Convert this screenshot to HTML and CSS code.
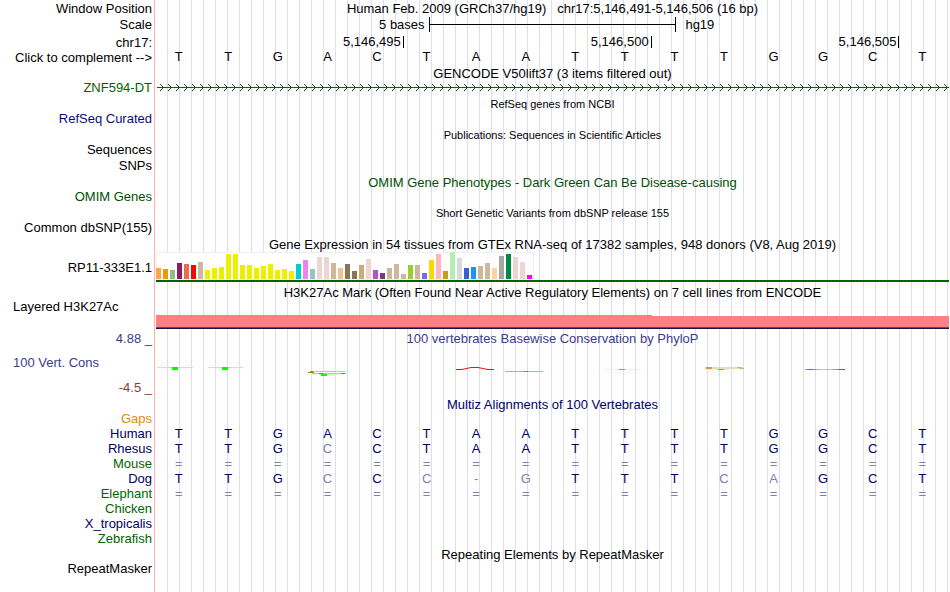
FILE: index.html
```html
<!DOCTYPE html>
<html lang="en">
<head>
<meta charset="utf-8">
<title>Human chr17:5,146,491-5,146,506</title>
<link rel="stylesheet" href="styles.css">
</head>
<body>
<main class="browser">
  <header class="position">
    <div class="row row-head"><span class="label">Window Position</span><h1 class="title">Human Feb. 2009 (GRCh37/hg19) &nbsp; chr17:5,146,491-5,146,506 (16 bp)</h1></div>
    <div class="row row-head"><span class="label">Scale</span><div class="scale"><span class="scale-size">5 bases</span><span class="scale-bar"></span><span class="scale-db">hg19</span></div></div>
    <div class="row row-ruler"><span class="label">chr17:</span><div class="ruler"><span class="tick">5,146,495</span><span class="tick">5,146,500</span><span class="tick">5,146,505</span></div></div>
    <div class="row row-bases"><button class="label complement" type="button">Click to complement --&gt;</button><div class="bases" data-bases="TTGACTAATTTTGGCT"></div></div>
  </header>

  <section class="track">
    <h2 class="title track-title">GENCODE V50lift37 (3 items filtered out)</h2>
    <div class="row"><span class="label green">ZNF594-DT</span>
      <svg class="gene" aria-hidden="true">
        <defs><pattern id="arrow" x="3" y="0" width="8" height="15" patternUnits="userSpaceOnUse"><g fill="#006400"><rect x="1" y="4" width="1" height="1"/><rect x="2" y="5" width="1" height="1"/><rect x="3" y="6" width="1" height="1"/><rect x="3" y="8" width="1" height="1"/><rect x="2" y="9" width="1" height="1"/><rect x="1" y="10" width="1" height="1"/></g></pattern></defs>
        <rect x="1" y="0" width="100%" height="15" fill="url(#arrow)"/>
        <rect class="gene-line" x="1" y="7" width="100%" height="1"/>
      </svg></div>
  </section>

  <section class="track">
    <h2 class="title track-title small">RefSeq genes from NCBI</h2>
    <div class="row"><span class="label blue">RefSeq Curated</span></div>
  </section>

  <section class="track">
    <h2 class="title track-title small">Publications: Sequences in Scientific Articles</h2>
    <div class="row"><span class="label">Sequences</span></div>
    <div class="row row-head"><span class="label">SNPs</span></div>
  </section>

  <section class="track">
    <h2 class="title track-title omim">OMIM Gene Phenotypes - Dark Green Can Be Disease-causing</h2>
    <div class="row"><span class="label omim">OMIM Genes</span></div>
  </section>

  <section class="track">
    <h2 class="title track-title small">Short Genetic Variants from dbSNP release 155</h2>
    <div class="row"><span class="label">Common dbSNP(155)</span></div>
  </section>

  <section class="track">
    <h2 class="title track-title">Gene Expression in 54 tissues from GTEx RNA-seq of 17382 samples, 948 donors (V8, Aug 2019)</h2>
    <div class="row row-gtex"><span class="label">RP11-333E1.1</span>
      <svg class="gtex" role="img" aria-label="Expression by tissue">
        <rect class="gtex-frame" x="0" y="1" width="377" height="27"/>
        <g id="tissues"></g>
        <rect class="gene-line" x="0" y="29" width="100%" height="2"/>
      </svg></div>
  </section>

  <section class="track">
    <h2 class="title track-title">H3K27Ac Mark (Often Found Near Active Regulatory Elements) on 7 cell lines from ENCODE</h2>
    <div class="row row-h3k"><span class="label label-left">Layered H3K27Ac</span>
      <svg class="h3k" role="img" aria-label="H3K27Ac signal">
        <rect width="62.5%" y="16" height="2" fill="#fa7e7e"/>
        <rect width="100%" y="17" height="12" fill="#ff8080"/>
        <rect width="100%" y="28" height="1" fill="#70389a"/>
        <rect width="100%" y="29" height="1" fill="#20104c"/>
      </svg></div>
  </section>

  <section class="track">
    <div class="row row-title"><span class="label cons">4.88 _</span><h2 class="title cons">100 vertebrates Basewise Conservation by PhyloP</h2></div>
    <div class="row row-phylop">
      <div class="label phylop-labels"><span class="label-left cons">100 Vert. Cons</span><span class="low">-4.5 _</span></div>
      <svg class="phylop" viewBox="1 0 793 50" preserveAspectRatio="none" role="img" aria-label="PhyloP scores">
        <defs><linearGradient id="cool"><stop offset="0" stop-color="#9a9aff"/><stop offset=".12" stop-color="#5050ff"/><stop offset=".35" stop-color="#b4b4ff"/><stop offset=".65" stop-color="#b4b4ff"/><stop offset="1" stop-color="#3c3cff"/></linearGradient></defs>
        <g fill="#a8ffa8"><rect x="2" y="22" width="36" height="1"/><rect x="53" y="22" width="35" height="1"/></g>
        <g fill="#dcffdc"><rect x="151" y="29" width="38" height="1"/><rect x="449" y="24" width="36" height="1"/><rect x="548" y="24" width="30" height="1"/></g>
        <g fill="#00ff00"><rect x="17" y="22" width="6" height="3"/><rect x="67" y="22" width="6" height="3"/><rect x="166" y="29" width="6" height="2"/><rect x="464" y="24" width="6" height="1"/><rect x="563" y="24" width="6" height="1"/></g>
        <g fill="#cfc87c"><rect x="155" y="26" width="35" height="1"/><rect x="157" y="28" width="34" height="1"/></g>
        <g fill="#989000"><rect x="153" y="27" width="6" height="1"/><rect x="155" y="26" width="3" height="1"/><rect x="164" y="28" width="4" height="1"/><rect x="186" y="28" width="4" height="1"/></g>
        <path d="M301 24.5 H307 L316 22.5 H323 L333 24.5 H339" fill="none" stroke="#f01010" stroke-width="1.2"/>
        <rect x="350" y="26" width="38" height="1" fill="#ff9090"/><rect x="369" y="26" width="4" height="1" fill="#f05050"/>
        <rect x="550" y="22" width="38" height="2" fill="#e5deb8"/><rect x="551" y="22" width="6" height="2" fill="#b8aa40"/><rect x="582" y="22" width="5" height="1" fill="#c8b860"/><rect x="585" y="23" width="4" height="1" fill="#c8b860"/>
        <rect x="650" y="24" width="40" height="1" fill="url(#cool)"/>
      </svg>
    </div>
  </section>

  <section class="track track-multiz">
    <h2 class="title track-title navy">Multiz Alignments of 100 Vertebrates</h2>
    <table class="alignment">
      <colgroup><col class="species-col"><col span="16"></colgroup>
      <tbody>
        <tr><th class="gaps" scope="row">Gaps</th><td colspan="16"></td></tr>
        <tr data-bases="TTGACTAATTTTGGCT"><th class="navy" scope="row">Human</th></tr>
        <tr data-bases="TTGcCTAATTTTGGCT"><th class="navy" scope="row">Rhesus</th></tr>
        <tr data-bases="================"><th class="green" scope="row">Mouse</th></tr>
        <tr data-bases="TTGcCc-gTTTcaGCT"><th class="navy" scope="row">Dog</th></tr>
        <tr data-bases="================"><th class="green" scope="row">Elephant</th></tr>
        <tr><th class="green" scope="row">Chicken</th><td colspan="16"></td></tr>
        <tr><th class="navy" scope="row">X_tropicalis</th><td colspan="16"></td></tr>
        <tr><th class="green" scope="row">Zebrafish</th><td colspan="16"></td></tr>
      </tbody>
    </table>
  </section>

  <section class="track">
    <h2 class="title track-title">Repeating Elements by RepeatMasker</h2>
    <div class="row"><span class="label">RepeatMasker</span></div>
  </section>
</main>
<script src="tracks.js"></script>
</body>
</html>
```
FILE: styles.css
```css
* { box-sizing: border-box; }

body {
  margin: 0;
  background: #fff;
  color: #000;
  font: 13px/15px "Liberation Sans", Arial, Helvetica, sans-serif;
}

.browser {
  --label-width: 156px;
  min-height: 100vh;
  margin-right: 1px;
  background:
    linear-gradient(#ffb0b0, #ffb0b0) 154px 0 / 1px 100% no-repeat,
    repeating-linear-gradient(90deg, #dcdcf8 0 1px, transparent 1px 12px) 167px 0 / 100% 100% no-repeat;
}

.row {
  display: grid;
  grid-template-columns: var(--label-width) 1fr;
  min-height: 15px;
}

.row-head { height: 16px; line-height: 18px; }
.row-ruler { min-height: 18px; align-items: end; }
.row-bases { height: 16px; }
.row-title { min-height: 0; height: 14px; line-height: 16px; }
.row-gtex { height: 32px; line-height: 34px; }
.row-h3k { min-height: 30px; }
.row-phylop { min-height: 50px; }

.label {
  padding-right: 4px;
  text-align: right;
  white-space: nowrap;
}

.label-left { padding-left: 13px; text-align: left; }

.complement {
  align-self: start;
  border: 0;
  padding-top: 0;
  padding-bottom: 0;
  padding-left: 0;
  background: none;
  color: inherit;
  font: inherit;
  cursor: pointer;
}

.title {
  margin: 0;
  font-size: 13px;
  font-weight: normal;
  text-align: center;
  white-space: nowrap;
}

.track { padding-bottom: 2px; }
.track-multiz { padding-bottom: 1px; }
.track-title { height: 14px; margin-left: var(--label-width); line-height: 16px; }
.small { font-size: 11px; line-height: 14px; }

.scale { display: grid; grid-template-columns: 1fr 31.25% 1fr; }
.scale-size { padding-right: 4px; text-align: right; }
.scale-db { padding-left: 9px; }
.scale-bar {
  height: 15px;
  margin-top: 1px;
  border: solid #000;
  border-width: 0 1px;
  background: linear-gradient(#000, #000) 0 7px / 100% 1px no-repeat;
}

.ruler { display: grid; grid-template-columns: repeat(16, 1fr); }
.tick {
  grid-column: span 5;
  margin-bottom: 2px;
  padding-right: 2px;
  border-right: 1px solid #000;
  line-height: 12px;
  text-align: right;
}

.bases { display: grid; grid-template-columns: repeat(16, 1fr); }
.bases span { padding-right: 4px; line-height: 14px; text-align: center; }

svg { display: block; width: 100%; }
.gene, .gtex, .h3k { shape-rendering: crispEdges; }
.gene { height: 15px; }
.gtex { height: 32px; }
.h3k { height: 30px; }
.phylop { height: 50px; }
.gene-line { fill: #006400; }
.gtex-frame { fill: #fff; stroke: #f0f0f0; }

.phylop-labels {
  display: flex;
  flex-direction: column;
  justify-content: space-between;
  padding-top: 10px;
}

.alignment { width: 100%; border-collapse: collapse; table-layout: fixed; }
.species-col { width: var(--label-width); }
.alignment th, .alignment td { height: 15px; padding: 0 4px 0 0; font-weight: normal; }
.alignment th { text-align: right; }
.alignment td { color: #000064; text-align: center; }
.alignment .mismatch { color: #8080b2; }

.green { color: #006400; }
.omim { color: #005000; }
.blue { color: #0c0c78; }
.navy { color: #000064; }
.cons { color: #3c3c8c; }
.low { color: #8c3c3c; }
.gaps { color: #e08a10; }
```
FILE: tracks.js
```js
// Tissue bars of the expression track: [height, colour]
const tissues = [
  [11, "#ffa54f"], [10, "#ee9a00"], [9, "#8fbc8f"], [16, "#8b1c62"], [15, "#ee6a50"], [14, "#ff0000"], [17, "#cdb79e"],
  ...[9, 11, 12, 25, 25, 14, 14, 11, 13, 15, 9, 10, 8].map(h => [h, "#eeee00"]),
  [15, "#00cdcd"], [19, "#ee82ee"], [10, "#9ac0cd"], [22, "#eed5d2"], [22, "#eed5d2"], [16, "#cdb79e"], [11, "#eec591"],
  [15, "#8b7355"], [8, "#8b7355"], [14, "#cdaa7d"], [20, "#eed5d2"], [9, "#b452cd"], [6, "#7a378b"], [11, "#cdb79e"],
  [15, "#cdb79e"], [5, "#cdb79e"], [14, "#9acd32"], [14, "#cdb79e"], [6, "#7a67ee"], [19, "#ffd700"], [25, "#ffb6c1"],
  [8, "#cd9b1d"], [27, "#b4eeb4"], [21, "#d9d9d9"], [11, "#3a5fcd"], [12, "#1e90ff"], [13, "#cdb79e"], [16, "#cdb79e"],
  [11, "#ffd39b"], [23, "#a6a6a6"], [25, "#008b45"], [22, "#eed5d2"], [17, "#eed5d2"], [4, "#ff00ff"]
];

const group = document.getElementById("tissues");
tissues.forEach(([height, colour], i) => {
  const bar = document.createElementNS("http://www.w3.org/2000/svg", "rect");
  bar.setAttribute("x", i * 7);
  bar.setAttribute("y", 28 - height);
  bar.setAttribute("width", 5);
  bar.setAttribute("height", height);
  bar.setAttribute("fill", colour);
  group.append(bar);
});

// Lower case in the data marks a base that differs from human.
document.querySelectorAll("[data-bases]").forEach(row => {
  const tag = row.tagName === "TR" ? "td" : "span";
  for (const base of row.dataset.bases) {
    const cell = document.createElement(tag);
    cell.textContent = base.toUpperCase();
    if (!/[A-Z]/.test(base)) cell.className = "mismatch";
    row.append(cell);
  }
});
```
